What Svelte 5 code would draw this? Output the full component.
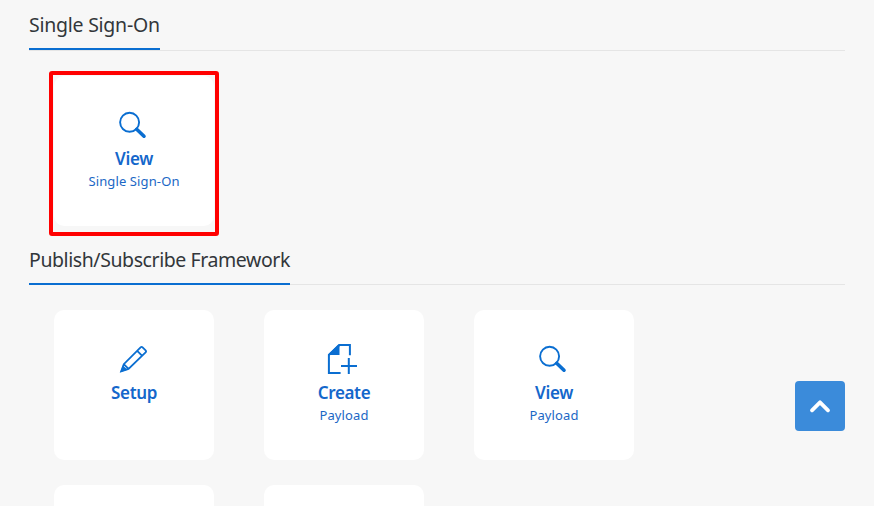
<script>
  const sections = [
    { title: 'Single Sign-On', width: 131, cards: [{ icon: 'search', title: 'View', sub: 'Single Sign-On', marked: true }] },
    {
      title: 'Publish/Subscribe Framework',
      width: 261,
      cards: [
        { icon: 'edit', title: 'Setup' },
        { icon: 'create', title: 'Create', sub: 'Payload' },
        { icon: 'search', title: 'View', sub: 'Payload' },
        {},
        {}
      ]
    }
  ];
</script>

<main>
  {#each sections as s, i}
    <section class:second={i === 1}>
      <header><h2 style="width: {s.width}px">{s.title}</h2></header>
      <div class="cards">
        {#each s.cards as c}
          <div class="card" class:marked={c.marked}>
            {#if c.icon}
              <svg class="icon" width="32" height="32" viewBox="0 0 32 32" fill="none" stroke="currentColor">
                {#if c.icon === 'search'}
                  <circle cx="11.6" cy="13.3" r="9.5" stroke-width="1.9" />
                  <path d="M18.7 20.3L26 27.2" stroke-width="3.6" stroke-linecap="round" />
                {:else if c.icon === 'edit'}
                  <path d="M3.2 28.3L5.8 21.2L22.6 4.4Q23.6 3.4 24.6 4.4L27.6 7.4Q28.6 8.4 27.6 9.4L10.5 25.9ZM19.2 7.8L24.2 12.8M6 21.4L10.4 25.7" stroke-width="1.8" />
                  <path d="M2.3 29.2L4.8 22.5L9.6 26.7Z" fill="currentColor" stroke="none" />
                {:else}
                  <path d="M21.9 12.2V2H11.5L.9 12V30H12.6" stroke-width="2" />
                  <path d="M11.5 1.2V12H0V11.4L10.4 1.2Z" fill="currentColor" stroke="none" />
                  <path d="M20.8 15V31M13 23H29" stroke-width="2" />
                {/if}
              </svg>
              <strong>{c.title}</strong>
              {#if c.sub}<span class="sub">{c.sub}</span>{/if}
            {/if}
          </div>
        {/each}
      </div>
    </section>
  {/each}
  <button aria-label="Back to top">
    <svg width="50" height="50" viewBox="0 0 50 50" fill="none" stroke="#fff" stroke-width="3.8" stroke-linecap="round" stroke-linejoin="round"><path d="M17 29.3L25 21.3L33 29.3" /></svg>
  </button>
</main>

<style>
  :global(body) { overflow: hidden; }
  main {
    position: relative;
    box-sizing: border-box;
    height: 506px;
    padding: 0 29px;
    overflow: hidden;
    background: #f7f7f7;
    font-family: "Noto Sans", sans-serif;
  }
  header { height: 51px; box-sizing: border-box; border-bottom: 1px solid #e5e5e5; }
  h2 {
    box-sizing: border-box;
    height: 50px;
    margin: 0;
    border-bottom: 2px solid #0a6ed1;
    color: #32363a;
    font-size: 19.5px;
    font-weight: 400;
    line-height: 49px;
    letter-spacing: -.25px;
    white-space: nowrap;
  }
  .second header { height: 50px; }
  .second h2 { letter-spacing: -.42px; }
  .cards { display: flex; flex-wrap: wrap; gap: 25px 50px; padding: 25px 25px 9px; }
  .second .cards { width: 580px; }
  .card {
    position: relative;
    display: flex;
    flex-direction: column;
    align-items: center;
    box-sizing: border-box;
    width: 160px;
    height: 150px;
    padding-top: 33px;
    border-radius: 10px;
    background: #fff;
    color: #0a6ed1;
  }
  .marked::after {
    content: "";
    position: absolute;
    inset: -5px -5px -10px;
    border: 4px solid #f00;
    border-radius: 3px;
  }
  .icon { display: block; flex: none; overflow: visible; }
  strong { margin-top: 6px; color: #1467cb; font-size: 17px; font-weight: 600; line-height: 24px; letter-spacing: -.35px; }
  .sub { color: #1b67c5; font-size: 13px; line-height: 20px; letter-spacing: .12px; }
  button {
    position: absolute;
    top: 381px;
    right: 29px;
    width: 50px;
    height: 50px;
    padding: 0;
    border: 0;
    border-radius: 4px;
    background: #3b8bda;
  }
  button svg { display: block; }
</style>
